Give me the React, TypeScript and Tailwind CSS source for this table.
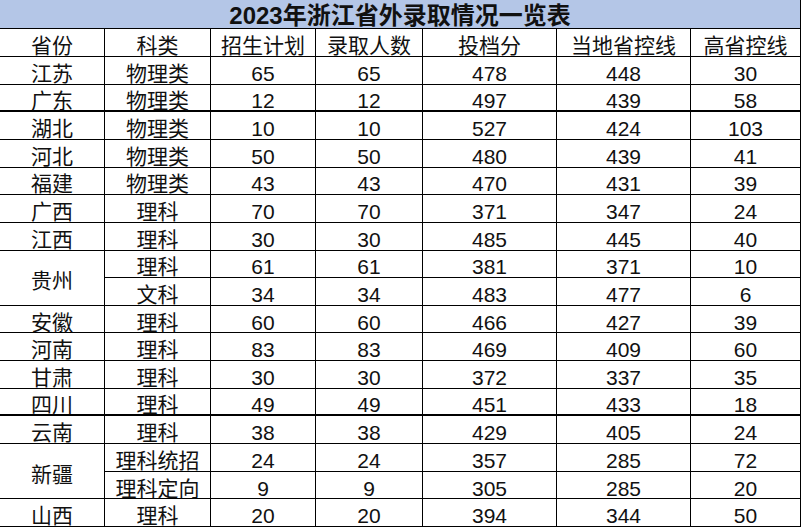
import React from "react";

type Row = { prov?: string; span?: number; type: string; plan: number; admit: number; score: number; local: number; diff: number; thick?: boolean };

const rows: Row[] = [
    { prov: "江苏", type: "物理类", plan: 65, admit: 65, score: 478, local: 448, diff: 30 },
    { prov: "广东", type: "物理类", plan: 12, admit: 12, score: 497, local: 439, diff: 58, thick: true },
    { prov: "湖北", type: "物理类", plan: 10, admit: 10, score: 527, local: 424, diff: 103 },
    { prov: "河北", type: "物理类", plan: 50, admit: 50, score: 480, local: 439, diff: 41 },
    { prov: "福建", type: "物理类", plan: 43, admit: 43, score: 470, local: 431, diff: 39 },
    { prov: "广西", type: "理科", plan: 70, admit: 70, score: 371, local: 347, diff: 24 },
    { prov: "江西", type: "理科", plan: 30, admit: 30, score: 485, local: 445, diff: 40 },
    { prov: "贵州", span: 2, type: "理科", plan: 61, admit: 61, score: 381, local: 371, diff: 10 },
    { type: "文科", plan: 34, admit: 34, score: 483, local: 477, diff: 6 },
    { prov: "安徽", type: "理科", plan: 60, admit: 60, score: 466, local: 427, diff: 39 },
    { prov: "河南", type: "理科", plan: 83, admit: 83, score: 469, local: 409, diff: 60 },
    { prov: "甘肃", type: "理科", plan: 30, admit: 30, score: 372, local: 337, diff: 35 },
    { prov: "四川", type: "理科", plan: 49, admit: 49, score: 451, local: 433, diff: 18, thick: true },
    { prov: "云南", type: "理科", plan: 38, admit: 38, score: 429, local: 405, diff: 24 },
    { prov: "新疆", span: 2, type: "理科统招", plan: 24, admit: 24, score: 357, local: 285, diff: 72 },
    { type: "理科定向", plan: 9, admit: 9, score: 305, local: 285, diff: 20 },
    { prov: "山西", type: "理科", plan: 20, admit: 20, score: 394, local: 344, diff: 50 },
];

const headers = ["省份", "科类", "招生计划", "录取人数", "投档分", "当地省控线", "高省控线"];

function Cell({ children, thick, span }: { children: React.ReactNode; thick?: boolean; span?: number }) {
    return (
        <div
            className={`flex items-center justify-center border-r border-black pt-[6px] ${thick ? "border-b-2" : "border-b"} ${span === 2 ? "row-span-2" : ""}`}
        >
            {children}
        </div>
    );
}

export default function App() {
    return (
        <div className="w-[803px] h-[528px] bg-white text-[#111] font-['Liberation_Sans','Noto_Sans_CJK_SC',sans-serif]">
            <div className="grid w-[801px] h-[527px] grid-cols-[105px_106px_105px_107px_134px_134px_110px] grid-rows-[29px_28px_repeat(17,minmax(0,1fr))] text-[21px] leading-none">
                <div className="col-span-7 flex items-center justify-center bg-[#b4c6e7] border-r border-b border-black pt-[4px] text-[24px] font-bold">
                    2023年浙江省外录取情况一览表
                </div>
                {headers.map((h) => (
                    <Cell key={h}>{h}</Cell>
                ))}
                {rows.map((r, i) => (
                    <React.Fragment key={i}>
                        {r.prov && (
                            <Cell thick={r.thick} span={r.span}>{r.prov}</Cell>
                        )}
                        <Cell thick={r.thick}>{r.type}</Cell>
                        <Cell thick={r.thick}>{r.plan}</Cell>
                        <Cell thick={r.thick}>{r.admit}</Cell>
                        <Cell thick={r.thick}>{r.score}</Cell>
                        <Cell thick={r.thick}>{r.local}</Cell>
                        <Cell thick={r.thick}>{r.diff}</Cell>
                    </React.Fragment>
                ))}
            </div>
        </div>
    );
}
